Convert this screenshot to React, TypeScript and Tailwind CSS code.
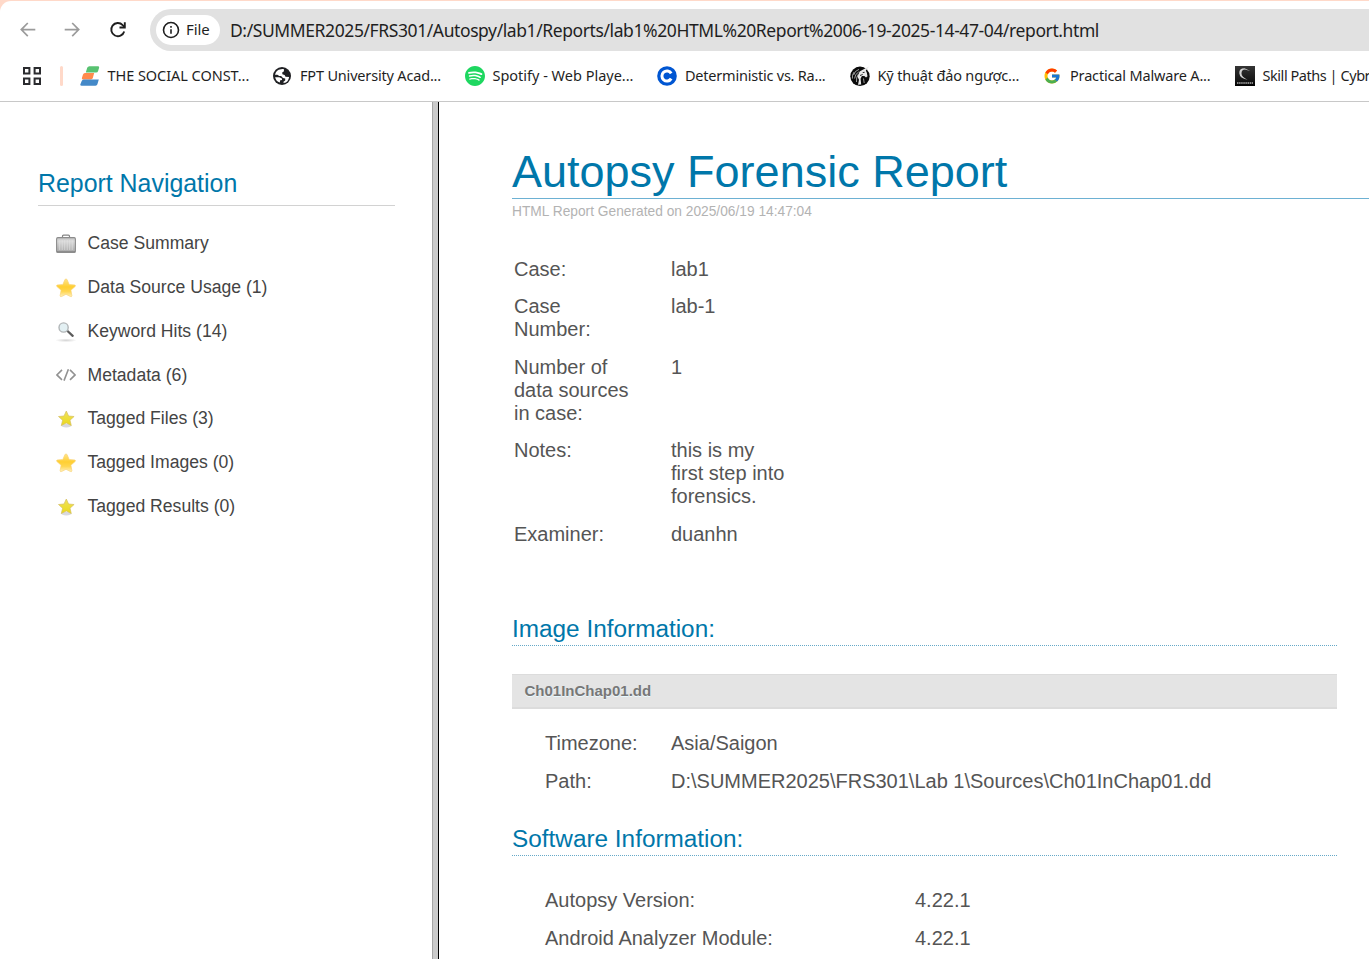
import React from "react";
import { FcGoogle } from "react-icons/fc";
import { SiSpotify } from "react-icons/si";

const BackIcon = () => (
  <svg className="h-5 w-5 shrink-0" viewBox="0 0 20 20" fill="none" stroke="#9b9b9b" strokeWidth="1.7">
    <path d="M17.3 9.6H3.4M9.8 3 3.3 9.6l6.5 6.6" />
  </svg>
);

const ForwardIcon = () => (
  <svg className="h-5 w-5 shrink-0" viewBox="0 0 20 20" fill="none" stroke="#9b9b9b" strokeWidth="1.7">
    <path d="M2.7 9.6h13.9M10.2 3l6.5 6.6-6.5 6.6" />
  </svg>
);

const ReloadIcon = () => (
  <svg className="h-5 w-5 shrink-0" viewBox="0 0 20 20" fill="none" stroke="#1f1f1f" strokeWidth="1.9">
    <path d="M16.2 11.4a6.6 6.6 0 1 1-1.5-6.3l2 2" />
    <path d="M16.8 2.2v5.3h-5.3" />
  </svg>
);

const InfoIcon = () => (
  <svg className="h-[18px] w-[18px] shrink-0" viewBox="0 0 18 18" fill="none" stroke="#1f1f1f">
    <circle cx="9" cy="9" r="7.5" strokeWidth="1.6" />
    <path d="M9 8.2v4.6M9 5.1v1.7" strokeWidth="1.6" />
  </svg>
);

const AppsIcon = () => (
  <svg className="h-[18px] w-[18px] shrink-0" viewBox="0 0 18 18" fill="none" stroke="#2a2b2e" strokeWidth="2">
    <path d="M1 1h5.4v5.4H1zM11.6 1H17v5.4h-5.4zM1 11.6h5.4V17H1zM11.6 11.6H17V17h-5.4z" />
  </svg>
);

const SocialIcon = () => (
  <svg className="h-5 w-5 shrink-0" viewBox="0 0 20 20">
    <path d="M7.2 1.8Q7.8.2 9.4.2h8.8q1.4 0 .9 1.5l-1 3.2q-.4 1.5-2 1.5H5.8z" fill="#58c271" />
    <path d="M3 8.600q.5-1.500 2-1.500h9.200L12.800 12q-.4 1.400-1.900 1.400H3.200q-1.800 0-1.300-1.500z" fill="#ff8a4c" />
    <path d="M1.700 15q.5-1.500 2-1.500h15.100l-1.400 4.800q-.4 1.400-1.900 1.400H1.600q-1.700 0-1.200-1.500z" fill="#4489c8" />
  </svg>
);

const GlobeIcon = () => (
  <svg className="h-5 w-5 shrink-0" viewBox="0 0 20 20">
    <circle cx="10" cy="10" r="9" fill="#202124" />
    <path d="M10.500 3.100h1.300l.2 2.200-1.800 1.100.2 1.800 2.200.7.900 1.800 3.600.2q-.6 5.400-5.500 6.100l-.1-1.300 1.700-1.200v-2l-2.200-.6-1.900-1.900H7.300l-2-1.200H3q.8-4.900 6-5.600z" fill="#fff" />
    <path d="M3.100 11.200h4.200l2.600 1.200.2 1.600-1.900.3-.4 2.300q-3.800-1.300-4.700-5.400z" fill="#fff" />
  </svg>
);

const CourseIcon = () => (
  <svg className="h-5 w-5 shrink-0" viewBox="0 0 20 20">
    <circle cx="10" cy="10" r="9.800" fill="#0056d2" />
    <path d="M14.200 7.400a5 5 0 1 0 0 5.200" fill="none" stroke="#fff" strokeWidth="3" />
  </svg>
);

const DragonIcon = () => (
  <svg className="h-5 w-5 shrink-0" viewBox="0 0 20 20">
    <circle cx="10" cy="10.300" r="9.700" fill="#0b0b0b" />
    <path d="m9.600 5.600 3.600-2L19.400.2l-3.600 4.300 1 2.200.7 3.500-1.500 1.200-1.700-1.500-2.400.1-1.300 2.700.6 5.900-3.200.1 1-5-1.500-3z" fill="#e8e8e8" />
    <path d="M9 3.400Q4.600 4.700 3.600 9.100M8.800 5.800Q5 7.800 4.600 12.500M8.300 8.200Q6 11.500 6.500 16M4 6.100Q1.900 9 2.400 12.600M13.500 12.500l.7 4.500" fill="none" stroke="#ddd" strokeWidth=".7" />
    <path d="m12.700 6.600 1.900-.3M10 9.500l2.700-1" fill="none" stroke="#111" strokeWidth=".9" />
  </svg>
);

const CybraryIcon = () => (
  <svg className="h-5 w-5 shrink-0" viewBox="0 0 20 20">
    <defs>
      <linearGradient id="cy" x1="0" y1="0" x2="0" y2="1">
        <stop offset="0" stopColor="#353535" />
        <stop offset=".7" stopColor="#161616" />
        <stop offset="1" stopColor="#000" />
      </linearGradient>
    </defs>
    <path d="M0 0h20v20H0z" fill="url(#cy)" />
    <path d="M15.200 5 9.500 2.200Q4 2.200 4.300 7.300q.5 5 8.200 6.500-6-3-6-6.300Q6.500 3.600 10 3.500z" fill="#d0d0d0" />
    <path d="M2 17h16" stroke="#858585" strokeWidth="2" strokeDasharray="1.500 .6" />
  </svg>
);

const CaseIcon = () => (
  <svg className="h-5 w-5 shrink-0" viewBox="0 0 20 20">
    <defs>
      <linearGradient id="metal" x1="0" y1="0" x2="0" y2="1">
        <stop offset="0" stopColor="#c4c4c4" />
        <stop offset=".25" stopColor="#d9d9d9" />
        <stop offset="1" stopColor="#a9a9a9" />
      </linearGradient>
    </defs>
    <path d="M6.500 3.600V2.200q0-1 1-1h5q1 0 1 1v1.400" fill="none" stroke="#858585" strokeWidth="1.200" />
    <rect x=".6" y="3.600" width="18.800" height="14.600" rx="1.300" fill="url(#metal)" stroke="#8c8c8c" strokeWidth="1.100" />
    <path d="M3.700 6v10M6.200 6v10M8.700 6v10M11.200 6v10M13.700 6v10M16.200 6v10" stroke="#e6e6e6" strokeWidth="1" opacity=".6" />
    <path d="M.6 18h18.800" stroke="#777" strokeWidth="1" />
  </svg>
);

const BigStarIcon = () => (
  <svg className="h-5 w-5 shrink-0" viewBox="0 0 20 20">
    <defs>
      <linearGradient id="gold" x1="0" y1="0" x2="0" y2="1">
        <stop offset="0" stopColor="#ffe48c" />
        <stop offset=".45" stopColor="#ffcf32" />
        <stop offset=".7" stopColor="#ffd650" />
        <stop offset="1" stopColor="#fff0bd" />
      </linearGradient>
    </defs>
    <path d="M10 .9q.8 0 1.300 1.200l1.900 4.400 5.600.5q1.200.4.300 1.500l-4.200 3.700 1 5.500q-.1 1.400-1.500.8L10 16.300l-4.400 2.200q-1.400.6-1.500-.8l1-5.500L.9 8.500Q0 7.400 1.200 7l5.600-.5 1.900-4.400Q9.200.9 10 .9z" fill="url(#gold)" stroke="#f9d47a" strokeWidth=".7" strokeLinejoin="round" />
  </svg>
);

const SmallStarIcon = () => (
  <svg className="h-5 w-5 shrink-0" viewBox="0 0 20 20">
    <defs>
      <linearGradient id="lemon" x1="0" y1="0" x2="0" y2="1">
        <stop offset="0" stopColor="#f0e25c" />
        <stop offset="1" stopColor="#ead91a" />
      </linearGradient>
    </defs>
    <ellipse cx="10.300" cy="16.600" rx="5" ry="1.800" fill="#d9d9df" />
    <path d="m10.300 2 2.300 5 5.500.5-4.100 3.700 1.300 5.400-5-2.700-5 2.700 1.300-5.400-4.100-3.700L8 7z" fill="url(#lemon)" stroke="#d6bf62" strokeWidth=".7" strokeLinejoin="round" />
  </svg>
);

const SearchIcon = () => (
  <svg className="h-5 w-5 shrink-0" viewBox="0 0 20 20">
    <defs>
      <radialGradient id="shade">
        <stop offset="0" stopColor="#d4d4d4" />
        <stop offset="1" stopColor="#fff" />
      </radialGradient>
    </defs>
    <ellipse cx="10" cy="18.300" rx="11" ry="1.900" fill="url(#shade)" />
    <path d="m11.500 9 5.200 4.800" stroke="#5c5c5c" strokeWidth="2.300" strokeLinecap="round" />
    <circle cx="7.600" cy="5.500" r="4.600" fill="#e3f0f3" stroke="#b1b5b7" strokeWidth="1.400" />
  </svg>
);

const CodeIcon = () => (
  <svg className="h-5 w-5 shrink-0" viewBox="0 0 20 20" fill="none" stroke="#929292" strokeWidth="1.600">
    <path d="M6 3.900.9 8.900 6 13.900M14 3.900l5.100 5L14 13.900M12.400 3.200 8 14.600" />
  </svg>
);

const bookmarks = [
  { label: "THE SOCIAL CONST...", icon: <SocialIcon />, text: "tracking-[-0.050px]" },
  { label: "FPT University Acad...", icon: <GlobeIcon />, text: "tracking-[-0.180px]" },
  { label: "Spotify - Web Playe...", icon: <SiSpotify className="h-5 w-5 shrink-0 text-[#1ed760]" />, text: "tracking-[-0.010px]" },
  { label: "Deterministic vs. Ra...", icon: <CourseIcon />, text: "tracking-[-0.220px]" },
  { label: "Kỹ thuật đảo ngược...", icon: <DragonIcon />, text: "tracking-[-0.170px]" },
  { label: "Practical Malware A...", icon: <FcGoogle className="h-[18px] w-5 shrink-0" />, text: "tracking-[-0.170px]" },
  { label: "Skill Paths | Cybr", icon: <CybraryIcon />, text: "tracking-[-0.450px]" },
];

const navItems = [
  { label: "Case Summary", icon: <CaseIcon /> },
  { label: "Data Source Usage (1)", icon: <BigStarIcon /> },
  { label: "Keyword Hits (14)", icon: <SearchIcon /> },
  { label: "Metadata (6)", icon: <CodeIcon /> },
  { label: "Tagged Files (3)", icon: <SmallStarIcon /> },
  { label: "Tagged Images (0)", icon: <BigStarIcon /> },
  { label: "Tagged Results (0)", icon: <SmallStarIcon /> },
];

const caseRows = [
  ["Case:", "lab1"],
  ["Case Number:", "lab-1"],
  ["Number of data sources in case:", "1"],
  ["Notes:", "this is my first step into forensics."],
  ["Examiner:", "duanhn"],
];

const Toolbar = () => (
  <header className="h-[102px] shrink-0 bg-[#ffd9c9] pt-px font-['Noto_Sans','Open_Sans',sans-serif] text-[#1f1f1f]">
    <div className="h-[101px] overflow-hidden rounded-tl-[11px] border-b border-[#c8c8c8] bg-white">
      <div className="flex h-[58px] items-center pl-[18px]">
        <BackIcon />
        <div className="ml-6"><ForwardIcon /></div>
        <div className="ml-[25.500px]"><ReloadIcon /></div>
        <div className="ml-[22.500px] flex h-[42px] flex-1 items-center rounded-l-full bg-[#e1e1e1] pl-1.5">
          <div className="flex h-[30px] w-[64px] items-center rounded-full bg-white pl-1.5">
            <InfoIcon />
            <span className="-mt-px ml-[6px] text-[15px] tracking-[-0.1px]">File</span>
          </div>
          <span className="ml-2.5 whitespace-nowrap text-[17.500px] tracking-[-0.407px]">
            D:/SUMMER2025/FRS301/Autospy/lab1/Reports/lab1%20HTML%20Report%2006-19-2025-14-47-04/report.html
          </span>
        </div>
      </div>
      <div className="flex h-[34px] items-center pl-[23px]">
        <AppsIcon />
        <div className="ml-[19px] h-5 w-[3px] shrink-0 rounded-full bg-[#ffd9c9]" />
        <div className="ml-[16.500px] flex">
          {bookmarks.map((b) => (
            <div key={b.label} className="flex w-[192.500px] shrink-0 items-center">
              {b.icon}
              <span className={`-mt-[2px] ml-2 whitespace-nowrap text-[14.500px] leading-5 ${b.text}`}>{b.label}</span>
            </div>
          ))}
        </div>
      </div>
    </div>
  </header>
);

const Sidebar = () => (
  <nav className="w-[432px] shrink-0 pl-[38px] pt-[66px]">
    <h2 className="h-[38px] w-[357px] border-b border-[#d2d2d2] text-[24.900px] leading-[30px] text-[#07a]">Report Navigation</h2>
    <ul className="pl-[18px] pt-[15px]">
      {navItems.map((n) => (
        <li key={n.label} className="flex h-[43.750px] items-center">
          <div className="pt-[3px]">{n.icon}</div>
          <span className="ml-[11.500px] pt-[1.300px] text-[17.600px] text-[#444]">{n.label}</span>
        </li>
      ))}
    </ul>
  </nav>
);

const SectionTitle = ({ children }: { children: React.ReactNode }) => (
  <h2 className="h-[33px] w-[825px] border-b border-dotted border-[#66a9c8] text-[24.350px] leading-8 text-[#07a]">{children}</h2>
);

const Report = () => (
  <main className="min-w-0 flex-1 pl-[73px] text-[20px] leading-[23px] text-[#555]">
    <h1 className="mt-[43px] h-[54px] border-b border-[#6db1d3] text-[45px] leading-[54px] text-[#07a]">Autopsy Forensic Report</h1>
    <p className="mt-[4px] h-[18px] text-[13.750px] leading-[18px] text-[#b3b3b3]">HTML Report Generated on 2025/06/19 14:47:04</p>
    <div className="mt-[36.500px] flex h-[355.500px] flex-col gap-[14.600px] pl-[2px]">
      {caseRows.map(([k, v]) => (
        <div key={k} className="flex">
          <div className="w-[157px] pr-[40px]">{k}</div>
          <div className="w-[120px]">{v}</div>
        </div>
      ))}
    </div>
    <SectionTitle>Image Information:</SectionTitle>
    <div className="mt-[28px] h-[35px] w-[825px] border-b-2 border-t border-[#dcdcdc] bg-[#e4e4e4] pl-[12.500px] text-[15px] font-bold leading-[32px] text-[#777] [text-shadow:0_1px_0_#e9f9ff]">
      Ch01InChap01.dd
    </div>
    <div className="flex h-[114px] flex-col gap-[15px] pl-[33px] pt-[23px]">
      <div className="flex"><span className="w-[126px]">Timezone:</span><span>Asia/Saigon</span></div>
      <div className="flex"><span className="w-[126px]">Path:</span><span>D:\SUMMER2025\FRS301\Lab 1\Sources\Ch01InChap01.dd</span></div>
    </div>
    <SectionTitle>Software Information:</SectionTitle>
    <div className="flex flex-col gap-[15px] pl-[33px] pt-[33px]">
      <div className="flex"><span className="w-[370px]">Autopsy Version:</span><span>4.22.1</span></div>
      <div className="flex"><span className="w-[370px]">Android Analyzer Module:</span><span>4.22.1</span></div>
    </div>
  </main>
);

export default function App() {
  return (
    <div className="flex h-[959px] w-[1369px] flex-col overflow-hidden bg-white font-['Liberation_Sans',sans-serif]">
      <Toolbar />
      <div className="flex min-h-0 flex-1">
        <Sidebar />
        <div className="w-[7px] shrink-0 border-l border-r border-l-[#a5a5a5] border-r-black bg-[#cbcbcb]" />
        <Report />
      </div>
    </div>
  );
}
